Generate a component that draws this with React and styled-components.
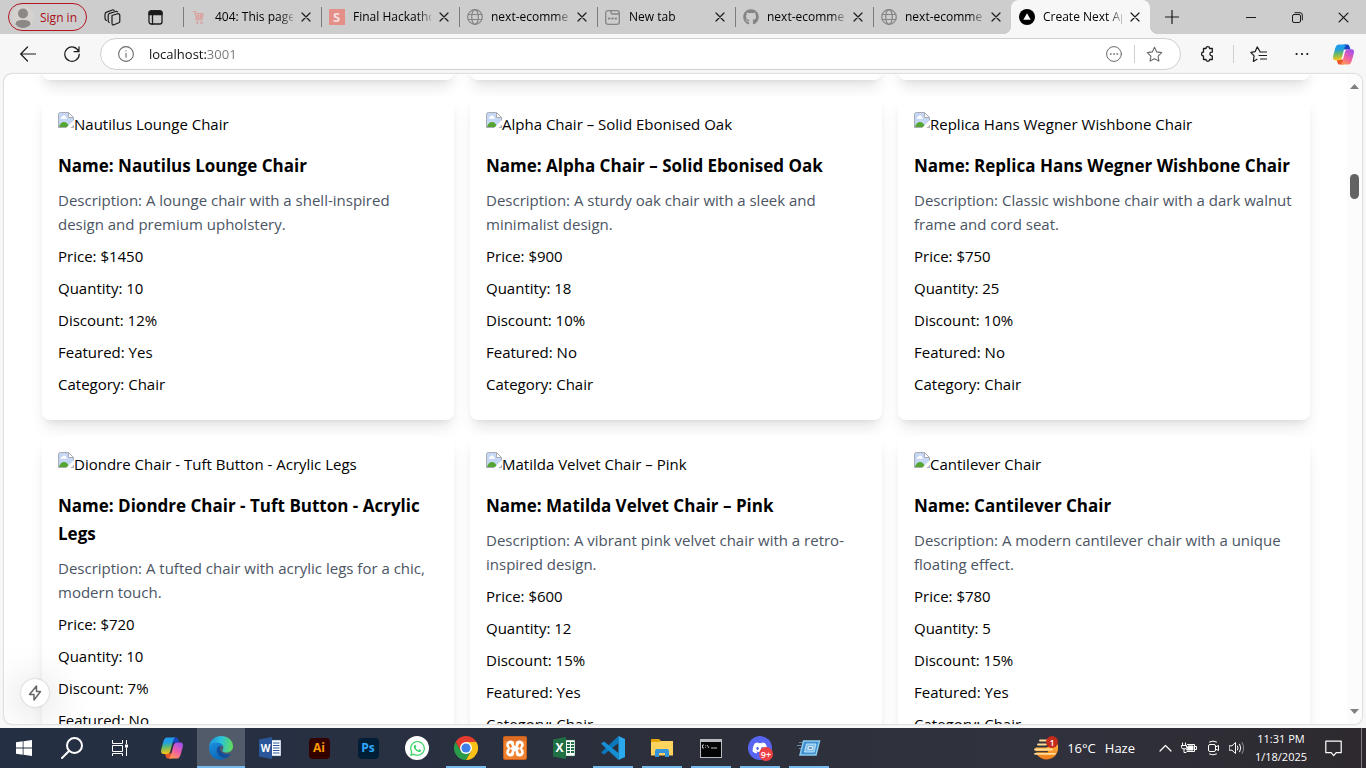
import React from 'react';
import styled, { createGlobalStyle, css } from 'styled-components';
import { FaGithub, FaWhatsapp, FaDiscord } from 'react-icons/fa';

const GlobalStyle = createGlobalStyle`
  *, *::before, *::after { box-sizing: border-box; }
  body { margin: 0; font-family: "Open Sans", "Noto Sans", sans-serif; font-size: 15px; color: #000; overflow: hidden; }
  button, input { font: inherit; color: inherit; padding: 0; border: 0; background: none; }
  h2, p, ul { margin: 0; padding: 0; }
  svg { display: block; flex: none; }
`;

const Shell = styled.div`
  display: flex;
  flex-direction: column;
  height: 100vh;
  background: #f7f7f7;
`;

/* ---------- Tab strip ---------- */

const TabStrip = styled.header`
  display: flex;
  align-items: stretch;
  height: 34px;
  flex: none;
  background: #cdcdcd;
  font-size: 12px;
`;

const StripTools = styled.div`
  display: flex;
  align-items: center;
  width: 183px;
  padding-left: 8px;
  flex: none;
`;

const SignIn = styled.button`
  display: flex;
  align-items: center;
  gap: 6px;
  width: 79px;
  height: 28px;
  padding-left: 3px;
  border: 1px solid #b3161f;
  border-radius: 14px;
  color: #a80f18;
  white-space: nowrap;
`;

const StripButton = styled.button`
  display: grid;
  place-items: center;
  width: 42px;
  height: 32px;
`;

const ToolPair = styled.div`
  display: flex;
  margin-left: 5px;
`;

const Tab = styled.div`
  position: relative;
  display: flex;
  align-items: center;
  flex: 0 1 138px;
  min-width: 60px;
  padding: 0 6px 0 7px;
  ${(p) => p.$active
    ? css`
        background: #f7f7f7;
        border-radius: 8px 8px 0 0;
        flex-basis: 139px;
        &::before, &::after {
          content: "";
          position: absolute;
          bottom: 0;
          width: 8px;
          height: 8px;
        }
        &::before { left: -8px; background: radial-gradient(circle at 0 0, #cdcdcd 8px, #f7f7f7 8px); }
        &::after { right: -8px; background: radial-gradient(circle at 100% 0, #cdcdcd 8px, #f7f7f7 8px); }
      `
    : css`
        &::before {
          content: "";
          position: absolute;
          left: 0;
          top: 7px;
          width: 1px;
          height: 20px;
          background: #7c7c7c;
        }
      `}
`;

const TabIcon = styled.span`
  display: grid;
  place-items: center;
  width: 17px;
  height: 17px;
  margin-right: 8px;
  flex: none;
`;

const TabTitle = styled.span`
  flex: 1;
  overflow: hidden;
  white-space: nowrap;
  line-height: 20px;
  mask-image: linear-gradient(90deg, #000 82%, transparent 105%);
`;

const TabClose = styled.button`
  display: grid;
  place-items: center;
  width: 18px;
  height: 18px;
  margin-left: 4px;
  flex: none;
`;

const NewTab = styled.button`
  display: grid;
  place-items: center;
  width: 43px;
  flex: none;
`;

const WindowControls = styled.div`
  display: flex;
  margin-left: auto;
`;

const WindowButton = styled.button`
  display: grid;
  place-items: center;
  width: 46px;
`;

/* ---------- Toolbar ---------- */

const Toolbar = styled.nav`
  display: flex;
  align-items: center;
  flex: none;
  height: 40px;
  padding-left: 6px;
`;

const ToolButton = styled.button`
  display: grid;
  place-items: center;
  width: ${(p) => p.$w || 44}px;
  height: 32px;
  flex: none;
`;

const AddressBar = styled.label`
  display: flex;
  align-items: center;
  flex: 1;
  height: 32px;
  margin-left: 6px;
  padding-left: 17px;
  padding-right: 6px;
  border: 1px solid #cfcfcf;
  border-radius: 16px;
  background: #fff;
`;

const AddressInput = styled.input`
  flex: 1;
  min-width: 0;
  margin-left: 15px;
  font-size: 13px;
  outline: 0;
  color: transparent;
  background: linear-gradient(90deg, #101010 57px, #767676 57px);
  background-clip: text;
  -webkit-background-clip: text;
`;

const Divider = styled.span`
  width: 1px;
  height: 18px;
  background: #cfcfcf;
  flex: none;
`;

/* ---------- Page ---------- */

const PagePanel = styled.div`
  position: relative;
  display: flex;
  flex: 1;
  min-height: 0;
  margin: 0 4px 4px;
  overflow: hidden;
  border-radius: 8px;
  background: #fff;
  box-shadow: 0 0 2px rgba(0, 0, 0, 0.35);
`;

const PageContent = styled.main`
  flex: 1;
  min-width: 0;
  overflow: hidden;
  padding: 0 37px 0 38px;
`;

/* The list is scrolled: only the lower edge of the preceding row is in view. */
const ProductGrid = styled.div`
  display: grid;
  grid-template-columns: repeat(3, minmax(0, 1fr));
  gap: 16px;
  margin-top: -74px;
`;

const cardSurface = css`
  border-radius: 8px;
  background: #fff;
  box-shadow: 0 10px 15px -3px rgba(0, 0, 0, 0.1), 0 4px 6px -4px rgba(0, 0, 0, 0.1);
`;

const CardEnd = styled.div`
  height: 80px;
  ${cardSurface}
`;

const Card = styled.article`
  padding: 16px 16px 24px;
  line-height: 24px;
  ${cardSurface}
`;

const MissingImage = styled.div`
  display: flex;
  height: 24px;
  margin-bottom: 16px;
  white-space: nowrap;
`;

const ProductName = styled.h2`
  font-size: 17px;
  font-weight: 700;
  line-height: 28px;
`;

const Description = styled.p`
  margin-top: 8px;
  color: #4b5563;
`;

const Detail = styled.p`
  margin-top: 8px;
`;

const Scrollbar = styled.div`
  display: flex;
  flex-direction: column;
  align-items: center;
  width: 15px;
  flex: none;
  background: #fcfcfc;
`;

const ScrollArrow = styled.button`
  display: grid;
  place-items: center;
  width: 15px;
  height: 25px;
`;

const ScrollTrack = styled.div`
  flex: 1;
  padding-top: 75px;
`;

const ScrollThumb = styled.div`
  width: 9px;
  height: 25px;
  border-radius: 5px;
  background: #636363;
`;

const DevIndicator = styled.button`
  position: absolute;
  left: 17px;
  bottom: 17px;
  display: grid;
  place-items: center;
  width: 28px;
  height: 28px;
  border-radius: 50%;
  background: #fff;
  box-shadow: 0 0 2px rgba(0, 0, 0, 0.25), 0 4px 40px rgba(0, 0, 0, 0.25);
`;

/* ---------- Taskbar ---------- */

const Taskbar = styled.footer`
  display: flex;
  flex: none;
  height: 40px;
  background: linear-gradient(90deg, #242f43 0%, #283041 30%, #2d2f3a 52%, #30323e 75%, #2d292e 100%);
  color: #fff;
`;

const TaskGroup = styled.div`
  display: flex;
  gap: ${(p) => p.$gap || 0}px;
  margin-left: ${(p) => p.$start || 0}px;
`;

const TaskButton = styled.button`
  position: relative;
  display: grid;
  place-items: center;
  width: 48px;
  height: 40px;
  background: ${(p) => (p.$active ? '#525b6a' : 'transparent')};
  ${(p) => (p.$active || p.$running) && css`
    &::after {
      content: "";
      position: absolute;
      bottom: 0;
      left: ${p.$active ? 0 : 4}px;
      right: ${p.$active ? 0 : 4}px;
      height: 2px;
      background: #76b9ed;
    }
  `}
`;

const Tray = styled.div`
  display: flex;
  align-items: center;
  margin-left: auto;
`;

const Weather = styled.button`
  display: flex;
  align-items: center;
  gap: 9px;
  height: 40px;
  margin-right: 18px;
  font-size: 13px;
`;

const TrayButton = styled.button`
  display: grid;
  place-items: center;
  width: 24px;
  height: 40px;
`;

const Clock = styled.button`
  width: 64px;
  font-size: 11px;
  line-height: 18px;
  text-align: center;
`;

const Notifications = styled.button`
  display: grid;
  place-items: center;
  width: 40px;
  height: 40px;
  margin-right: 8px;
`;

const ShowDesktop = styled.button`
  width: 5px;
  height: 40px;
  border-left: 1px solid #7d7b80;
`;

/* ---------- Icons ---------- */

const Line = ({ size = 16, w = size, h = size, box, width = 1, color = '#1b1b1b', children }) => (
  <svg width={w} height={h} viewBox={box || `0 0 ${w} ${h}`} fill="none" stroke={color}
    strokeWidth={width} strokeLinecap="round" strokeLinejoin="round" aria-hidden="true">{children}</svg>
);

const Cross = ({ size = 10 }) => (
  <Line size={size} box="0 0 10 10" width={1.2}><path d="M1 1l8 8M9 1L1 9" /></Line>
);

const Avatar = () => (
  <svg width="22" height="22" viewBox="0 0 22 22" aria-hidden="true">
    <circle cx="11" cy="11" r="11" fill="#d5d2ce" />
    <circle cx="11" cy="7.5" r="5" fill="#8b8886" />
    <path d="M3.5 18.500c0-3.500 2.500-4.500 7.500-4.500s7.500 1 7.500 4.500c-2 2.300-4.500 3.500-7.500 3.500s-5.500-1.200-7.500-3.500z" fill="#8b8886" />
  </svg>
);

const Workspaces = () => (
  <Line w={18} h={17} width={1.2}>
    <path d="M8 6.500l5.500-1.700q1.800-.4 2.300 1.200v6.200q0 1-1 1.500L10 15.800q-2 .5-2-1.500z" />
    <path d="M5.200 13.500q-1-.6-1-1.800V6.500q0-1.600 1.500-2.100l6-1.900q1.200-.2 1.800.4" />
    <path d="M2.500 11.500Q1 10.800 1 9.200V5.500q0-1.800 1.600-2.400L8.500 1q1-.2 1.700.4" />
  </Line>
);

const TabActions = () => (
  <Line w={15} h={15} width={1.3}>
    <rect x="1" y="1" width="13" height="13" rx="2.200" />
    <path d="M1 3.200Q1 1 3 1h9q2 0 2 2.200V4.500H1z" fill="#1b1b1b" />
    <path d="M4.500 4.500V14" />
  </Line>
);

const Cart = () => (
  <svg width="11" height="15" viewBox="0 0 11 15" fill="none" stroke="#dc9f9c" aria-hidden="true">
    <path d="M0 1.500h2l1.500 8.500H9.500M3 3.500h7l-.8 5H3.500M3 6h6.500M5.200 3.500v5M7.500 3.500v5" strokeWidth="1.200" />
    <circle cx="4.200" cy="12.800" r=".8" fill="#dc9f9c" /><circle cx="8.500" cy="12.800" r=".8" fill="#dc9f9c" />
  </svg>
);

const LetterTile = styled.span`
  display: grid;
  place-items: center;
  width: ${(p) => p.$size}px;
  height: ${(p) => p.$size}px;
  border-radius: ${(p) => p.$radius || 0}px;
  background: ${(p) => p.$bg};
  color: ${(p) => p.$fg};
  font: 700 ${(p) => p.$text}px/1 "Open Sans", sans-serif;
`;

const Globe = () => (
  <Line size={16} color="#858585" width={1.2}>
    <circle cx="8" cy="8" r="7.300" /><ellipse cx="8" cy="8" rx="3.300" ry="7.300" /><path d="M1.200 5.500h13.600M1.200 10.500h13.600" />
  </Line>
);

const NewTabPage = () => (
  <Line w={15} h={15} color="#858585" width={1.3}>
    <rect x=".7" y=".7" width="13.600" height="13.600" rx="2.300" />
    <path d="M6 1v1.500q0 1.500 1.500 1.500H14" /><path d="M3.800 8.500h.8M7.100 8.500h.8M10.400 8.500h.8" strokeWidth="1.800" />
  </Line>
);

const Triangle = () => (
  <svg width="16" height="16" viewBox="0 0 16 16" aria-hidden="true">
    <circle cx="8" cy="8" r="8" fill="#000" /><path d="M8 4.200l3.700 6.500H4.300z" fill="#fff" />
  </svg>
);

const Copilot = ({ size = 24, id }) => (
  <svg width={size} height={size} viewBox="0 0 24 24" aria-hidden="true">
    <defs>
      <linearGradient id={`${id}a`} x1="0" y1="0" x2="0.1" y2="1">
        <stop offset="0" stopColor="#1f9cf0" /><stop offset=".35" stopColor="#219ee0" /><stop offset=".62" stopColor="#68b867" /><stop offset="1" stopColor="#f5c518" />
      </linearGradient>
      <linearGradient id={`${id}b`} x1=".7" y1="0" x2=".2" y2="1">
        <stop offset="0" stopColor="#a450ef" /><stop offset=".5" stopColor="#ed5fa8" /><stop offset="1" stopColor="#ff9a4d" />
      </linearGradient>
    </defs>
    <path d="M12 1.500h4.500q1.300.3 1.800 2.200l1 3h-7z" fill="#1746c0" />
    <path d="M12 22.500H7.500q-1.300-.3-1.800-2.200l-1-3h7z" fill="#e9572b" />
    <path d="M6.700 1.500h8.500q-1.500.8-2.200 3.500L10.500 14.500Q9.700 18 6.500 18H3.500Q.4 17.800 1.200 13.500L3.500 5Q4.500 1.700 6.700 1.500z" fill={`url(#${id}a)`} />
    <path d="M17.300 22.500H8.800q1.500-.8 2.200-3.500l2.500-9.500Q14.300 6.500 17.500 6.500h3q3.100.2 2.300 4.200L20.500 19q-1 3.300-3.200 3.500z" fill={`url(#${id}b)`} />
  </svg>
);

const BrokenPicture = () => (
  <svg width="16" height="16" viewBox="0 0 16 16" aria-hidden="true">
    <path d="M.5 2.500q0-2 2-2h8l5 5v10H.5z" fill="#c6d7f5" stroke="#a9adb3" />
    <path d="M1 15q1.500-5 5-5 3.500 0 5 5z" fill="#55a630" />
    <path d="M3 6q0-1.500 1.500-1.500Q5 3 6.500 3.500T8 5.500q1 .2 1 1.200H3z" fill="#fff" />
    <path d="M10.500.5v5h5z" fill="#fff" stroke="#a9adb3" />
    <path d="M16 8L8 16h4.500L16 12.500z" fill="#fff" />
  </svg>
);

const Windows = () => (
  <svg width="16" height="16" viewBox="0 0 16 16" fill="#fff" aria-hidden="true">
    <path d="M0 2.200L6.700 1.300v6.200H0zM7.500 1.200L16 0v7.500H7.500zM0 8.400h6.700v6.300L0 13.800zM7.500 8.400H16V16l-8.500-1.200z" />
  </svg>
);

const TaskSearch = () => (
  <Line size={22} color="#fff" width={2}><circle cx="13.500" cy="8.500" r="7.500" /><path d="M8 14l-7 7" /></Line>
);

const TaskView = () => (
  <svg width="17" height="16" viewBox="0 0 17 16" fill="none" stroke="#fff" aria-hidden="true">
    <path d="M.5 0v3.500h10V0M.5 5.500h10v6H.5zM.5 16v-2.500h10V16M14.500 0v4M14.500 7.500V16" /><path d="M13 4.500h3v3h-3z" fill="#fff" stroke="none" />
  </svg>
);

const Edge = () => (
  <svg width="26" height="26" viewBox="0 0 26 26" aria-hidden="true">
    <defs>
      <linearGradient id="edgeTop" x1="0" y1=".4" x2="1" y2=".5"><stop offset="0" stopColor="#1c93dc" /><stop offset=".5" stopColor="#2dc3d8" /><stop offset="1" stopColor="#62dc58" /></linearGradient>
      <linearGradient id="edgeLow" x1="0" y1="0" x2=".6" y2="1"><stop offset="0" stopColor="#1b8fde" /><stop offset="1" stopColor="#0c68b8" /></linearGradient>
    </defs>
    <path d="M1 12C1.500 5 7 1 13 1c7 0 12 4.500 12 10.200 0 4-3 6.300-6.600 6.300-3.200 0-4.600-1.200-3.600-2.700 2-2.800-.8-6.300-5-6.300C5 8.500 2 10 1 12z" fill="url(#edgeTop)" />
    <path d="M1 12c1.500-3.300 5-4.700 8.500-4.500 3.200.2 5 2 5.800 4-4-1.500-7 1.300-6.500 4.800.7 4.300 5 7.200 9.200 7-6 3.500-17 1.200-17-11.300z" fill="url(#edgeLow)" />
    <path d="M9 13.500c-1 5 3 9.500 9 9.700 2-.8 4.200-2.700 5-4.700-4.500 2-9.600.3-11-3.500-.5-1.600.1-3 1.300-3.800-2-.3-3.700.6-4.300 2.300z" fill="#0f4f9e" />
  </svg>
);

const SheetTile = ({ letter, fill, dark, grid }) => (
  <svg width="22" height="22" viewBox="0 0 22 22" aria-hidden="true">
    <path d="M12 3h10v16H12z" fill="#fff" stroke={dark} strokeWidth=".5" />
    {grid
      ? <path d="M14 5h3v2h-3zM18 5h3v2h-3zM14 8h3v2h-3zM18 8h3v2h-3zM14 11h3v2h-3zM18 11h3v2h-3zM14 14h3v2h-3zM18 14h3v2h-3z" fill={fill} />
      : <path d="M14 6h6.500M14 8.500h6.500M14 11h6.500M14 13.500h6.500M14 16h6.500" stroke={fill} />}
    <path d="M0 2.500L13 0v22L0 19.500z" fill={fill} />
    <text x="6.500" y="15" fontFamily="Open Sans" fontSize={grid ? 12 : 10} fontWeight="700" textAnchor="middle" fill="#fff">{letter}</text>
  </svg>
);

const Chrome = () => (
  <svg width="24" height="24" viewBox="0 0 24 24" aria-hidden="true">
    <path d="M1.600 6L6.800 15 12 12V6.500L22.400 6A12 12 0 0 0 1.600 6z" fill="#e33b2e" />
    <path d="M1.600 6A12 12 0 0 0 12 24l5.200-9L12 12 6.800 15z" fill="#2a9b48" />
    <path d="M22.400 6H12l5.200 9L12 24A12 12 0 0 0 22.400 6z" fill="#fbc116" />
    <circle cx="12" cy="12" r="6" fill="#fff" /><circle cx="12" cy="12" r="4.600" fill="#3f7fe8" />
  </svg>
);

const Xampp = () => (
  <svg width="24" height="24" viewBox="0 0 24 24" aria-hidden="true">
    <rect width="24" height="24" rx="2" fill="#c9601c" />
    <rect x="1" y="1" width="22" height="22" rx="1.500" fill="#f07f2e" />
    <path d="M1 2.500q0-1.500 1.500-1.500h19q1.500 0 1.500 1.500V5H1z" fill="#dc6f25" />
    <g fill="#fff">
      <circle cx="7.500" cy="8.800" r="4.300" /><circle cx="16.500" cy="8.800" r="4.300" />
      <circle cx="7.500" cy="16.200" r="4.300" /><circle cx="16.500" cy="16.200" r="4.300" />
      <path d="M5 9.500h14v6H5z" />
    </g>
    <g fill="none" stroke="#f07f2e" strokeWidth="2.400" strokeLinecap="round" strokeLinejoin="round">
      <path d="M7 8.800L8.500 12.500 7 16.200M17 8.800L15.500 12.500 17 16.200" />
      <path d="M12 5v4M12 16v4" strokeWidth="1.600" />
    </g>
    <path d="M7.500 11.300h9v2.400h-9z" fill="#fff" />
  </svg>
);

const VsCode = () => (
  <svg width="24" height="24" viewBox="0 0 24 24" aria-hidden="true">
    <path d="M17.500 0v7L3 18.500 0 16.500z" fill="#0b78bd" />
    <path d="M0 7.500l3-2L17.500 17v7z" fill="#168ed4" />
    <path d="M17.500 0L24 3v18l-6.500 3z" fill="#2aa9ef" />
  </svg>
);

const Explorer = () => (
  <svg width="22" height="20" viewBox="0 0 22 20" aria-hidden="true">
    <path d="M0 1h8l2 2h12v14H0z" fill="#e5a50a" /><path d="M0 4h8l2-1h12v14.500H0z" fill="#ffd45e" />
    <path d="M4 19v-6q0-2 2-2h10q2 0 2 2v6h-4v-4H8v4z" fill="#3595dc" />
  </svg>
);

const Terminal = () => (
  <svg width="22" height="19" viewBox="0 0 22 19" aria-hidden="true">
    <path d="M0 0h22v19H0z" fill="#b8bcc0" /><path d="M1 3h20v15H1z" fill="#050505" />
    <path d="M4 6H2.500v3H4M5.500 6.500v.7M5.500 8v.7M7 6l2 3M11 9h6" stroke="#eee" strokeWidth=".8" fill="none" />
  </svg>
);

const DiscordIcon = styled.span`
  position: relative;
  display: grid;
  place-items: center;
  width: 24px;
  height: 24px;
  border-radius: 50%;
  background: #5865f2;
`;

const Badge = styled.span`
  position: absolute;
  right: ${(p) => p.$right}px;
  top: ${(p) => p.$top}px;
  display: grid;
  place-items: center;
  width: ${(p) => p.$size}px;
  height: ${(p) => p.$size}px;
  border-radius: 50%;
  background: ${(p) => p.$bg};
  color: #fff;
  font-size: 9px;
  font-weight: 600;
  line-height: 1;
`;

const WhatsAppIcon = styled.span`
  display: grid;
  place-items: center;
  width: 24px;
  height: 24px;
  border-radius: 50%;
  background: #fff;
  color: #3bd366;
`;

const RunBox = () => (
  <svg width="24" height="18" viewBox="0 0 24 18" aria-hidden="true">
    <path d="M6.500 2H22.500l-3.500 14H3z" fill="#3f8fd0" stroke="#8ecbf0" strokeWidth="1.500" />
    <path d="M9.500 5h9.500l-2 8H7.500z" fill="#7dbdea" stroke="#bfe3f8" /><path d="M11.500 7.800h4.500l-.6 2.400h-4.500z" fill="#2f6fae" stroke="#fff" />
    <path d="M2 3.500h3.500M0 6.500h4M2 9.500h2" stroke="#7ba3bd" strokeWidth=".8" />
  </svg>
);

const HazySun = () => (
  <svg width="24" height="24" viewBox="0 0 24 24" aria-hidden="true">
    <defs>
      <linearGradient id="sun" x1="0" y1="0" x2="0" y2="1"><stop offset="0" stopColor="#ffb73d" /><stop offset="1" stopColor="#ee7a1c" /></linearGradient>
    </defs>
    <path d="M1.500 11.500H12L23.500 8a11.500 11.500 0 0 1-22 7.500z" fill="url(#sun)" />
    <path d="M6 4.500h7M4 8.500h8M1 13.500h17M1 17.800h20" stroke="#ffdc96" strokeWidth="1.800" strokeLinecap="round" />
    <path d="M0 15.700h14" stroke="#30323e" strokeWidth="1.200" />
  </svg>
);

const WeatherIcon = styled.span`
  position: relative;
  display: block;
`;

/* ---------- Data ---------- */

const tabs = [
  { title: '404: This page could not', icon: <Cart /> },
  { title: 'Final Hackathon', icon: <LetterTile $size={16} $bg="#e58f89" $fg="#f6dfdd" $text={13}>S</LetterTile> },
  { title: 'next-ecommerce', icon: <Globe /> },
  { title: 'New tab', icon: <NewTabPage /> },
  { title: 'next-ecommerce', icon: <FaGithub size={16} color="#858585" /> },
  { title: 'next-ecommerce', icon: <Globe /> },
  { title: 'Create Next App', icon: <Triangle />, active: true },
];

const products = [
  { name: 'Nautilus Lounge Chair', description: 'A lounge chair with a shell-inspired design and premium upholstery.', price: 1450, quantity: 10, discount: 12, featured: true },
  { name: 'Alpha Chair – Solid Ebonised Oak', description: 'A sturdy oak chair with a sleek and minimalist design.', price: 900, quantity: 18, discount: 10, featured: false },
  { name: 'Replica Hans Wegner Wishbone Chair', description: 'Classic wishbone chair with a dark walnut frame and cord seat.', price: 750, quantity: 25, discount: 10, featured: false },
  { name: 'Diondre Chair - Tuft Button - Acrylic Legs', description: 'A tufted chair with acrylic legs for a chic, modern touch.', price: 720, quantity: 10, discount: 7, featured: false },
  { name: 'Matilda Velvet Chair – Pink', description: 'A vibrant pink velvet chair with a retro-inspired design.', price: 600, quantity: 12, discount: 15, featured: true },
  { name: 'Cantilever Chair', description: 'A modern cantilever chair with a unique floating effect.', price: 780, quantity: 5, discount: 15, featured: true },
];

const apps = [
  { name: 'Copilot', icon: <Copilot id="task" size={24} /> },
  { name: 'Edge', icon: <Edge />, active: true },
  { name: 'Word', icon: <SheetTile letter="W" fill="#2b579a" dark="#2b579a" /> },
  { name: 'Illustrator', icon: <LetterTile $size={21} $radius={4} $bg="#330000" $fg="#ff9a00" $text={12}>Ai</LetterTile> },
  { name: 'Photoshop', icon: <LetterTile $size={21} $radius={4} $bg="#001e36" $fg="#31a8ff" $text={12}>Ps</LetterTile> },
  { name: 'WhatsApp', icon: <WhatsAppIcon><FaWhatsapp size={17} /></WhatsAppIcon> },
  { name: 'Chrome', icon: <Chrome />, running: true },
  { name: 'XAMPP', icon: <Xampp /> },
  { name: 'Excel', icon: <SheetTile letter="X" fill="#1f7145" dark="#1f7145" grid /> },
  { name: 'Visual Studio Code', icon: <VsCode />, running: true },
  { name: 'File Explorer', icon: <Explorer />, running: true },
  { name: 'Command Prompt', icon: <Terminal />, running: true },
  { name: 'Discord', icon: <DiscordIcon><FaDiscord size={16} color="#fff" /><Badge $size={14} $right={-1} $top={11} $bg="#ed4245">9+</Badge></DiscordIcon>, running: true },
  { name: 'Run', icon: <RunBox />, running: true },
];

const Product = ({ item }) => (
  <Card>
    <MissingImage><BrokenPicture />{item.name}</MissingImage>
    <ProductName>{`Name: ${item.name}`}</ProductName>
    <Description>{`Description: ${item.description}`}</Description>
    <Detail>{`Price: $${item.price}`}</Detail>
    <Detail>{`Quantity: ${item.quantity}`}</Detail>
    <Detail>{`Discount: ${item.discount}%`}</Detail>
    <Detail>{`Featured: ${item.featured ? 'Yes' : 'No'}`}</Detail>
    <Detail>Category: Chair</Detail>
  </Card>
);

const starPath = 'M8.500 1.300l2.200 4.600 5 .7-3.600 3.500.8 5-4.400-2.400-4.400 2.400.8-5L1.300 6.600l5-.7z';

export default function App() {
  return (
    <Shell>
      <GlobalStyle />
      <TabStrip>
        <StripTools>
          <SignIn><Avatar />Sign in</SignIn>
          <ToolPair>
            <StripButton aria-label="Workspaces"><Workspaces /></StripButton>
            <StripButton aria-label="Tab actions"><TabActions /></StripButton>
          </ToolPair>
        </StripTools>
        {tabs.map((tab, i) => (
          <Tab key={i} $active={tab.active}>
            <TabIcon>{tab.icon}</TabIcon>
            <TabTitle>{tab.title}</TabTitle>
            <TabClose aria-label="Close tab"><Cross /></TabClose>
          </Tab>
        ))}
        <NewTab aria-label="New tab"><Line size={14} width={1.2}><path d="M7 .5v13M.5 7h13" /></Line></NewTab>
        <WindowControls>
          <WindowButton aria-label="Minimize"><Line size={10}><path d="M0 5.500h10" /></Line></WindowButton>
          <WindowButton aria-label="Restore"><Line size={11}><rect x=".5" y="2.500" width="8" height="8" rx="1.500" /><path d="M3 .7h5q2.300 0 2.300 2.300v5" /></Line></WindowButton>
          <WindowButton aria-label="Close window"><Cross size={11} /></WindowButton>
        </WindowControls>
      </TabStrip>

      <Toolbar>
        <ToolButton aria-label="Back"><Line size={16} width={1.2}><path d="M15.500 8H.7M7.500 1L.7 8l6.800 7" /></Line></ToolButton>
        <ToolButton aria-label="Reload"><Line size={16} width={1.2}><path d="M14.700 5.500A7.200 7.200 0 1 0 15.200 8M15 .8v4.900h-4.900" /></Line></ToolButton>
        <AddressBar>
          <Line size={16} color="#6b6b6b" width={1.100}><circle cx="8" cy="8" r="7.400" /><path d="M8 7.300v4M8 4.700v.2" /></Line>
          <AddressInput aria-label="Address" defaultValue="localhost:3001" />
          <ToolButton $w={40} type="button" aria-label="More site actions"><Line size={16} color="#6b6b6b"><circle cx="8" cy="8" r="7.400" /><path d="M4.500 8h.5M7.800 8h.4M11 8h.5" strokeWidth="1.600" /></Line></ToolButton>
          <Divider />
          <ToolButton $w={39} type="button" aria-label="Add to favorites"><Line size={17} color="#6b6b6b" width={1.100}><path d={starPath} /></Line></ToolButton>
        </AddressBar>
        <ToolButton $w={52} aria-label="Extensions">
          <Line w={12} h={16} width={1.3}><path d="M2.500 2.500h2.500a1.800 1.800 0 0 1 3.600 0h2.700v3.700h-.6a1.800 1.800 0 0 0 0 3.600h.6v3.700H8.600a1.800 1.800 0 0 1-3.600 0H2.500v-3.500a2 2 0 0 1 0-4z" /></Line>
        </ToolButton>
        <Divider />
        <ToolButton $w={49} aria-label="Favorites">
          <Line size={17} width={1.2}><path d="M10 5.500L7.200.9 5.200 5.600.8 6.400l3.300 3.500-.8 5.600 3.700-2.200M10 6h6.500M9 9.500h7.500M10.500 13h6" /></Line>
        </ToolButton>
        <ToolButton $w={38} aria-label="Settings and more"><Line w={14} h={4} width={2}><path d="M1.500 2h.2M6.900 2h.2M12.200 2h.2" /></Line></ToolButton>
        <ToolButton $w={45} aria-label="Copilot"><Copilot id="bar" size={23} /></ToolButton>
      </Toolbar>

      <PagePanel>
        <PageContent>
          <ProductGrid>
            <CardEnd /><CardEnd /><CardEnd />
            {products.map((item) => <Product key={item.name} item={item} />)}
          </ProductGrid>
        </PageContent>
        <Scrollbar>
          <ScrollArrow aria-label="Scroll up"><svg width="9" height="5" viewBox="0 0 9 5"><path d="M4.500 0L9 5H0z" fill="#808080" /></svg></ScrollArrow>
          <ScrollTrack><ScrollThumb /></ScrollTrack>
          <ScrollArrow aria-label="Scroll down"><svg width="9" height="5" viewBox="0 0 9 5"><path d="M4.500 5L9 0H0z" fill="#808080" /></svg></ScrollArrow>
        </Scrollbar>
        <DevIndicator aria-label="Static route">
          <Line w={14} h={16} color="#666" width={1.500}><path d="M8.500 1L1.500 9.500H6V15l6.500-8.500H8.500z" /></Line>
        </DevIndicator>
      </PagePanel>

      <Taskbar>
        <TaskGroup>
          <TaskButton aria-label="Start"><Windows /></TaskButton>
          <TaskButton aria-label="Search"><TaskSearch /></TaskButton>
          <TaskButton aria-label="Task view"><TaskView /></TaskButton>
        </TaskGroup>
        <TaskGroup $gap={1} $start={4}>
          {apps.map((app) => (
            <TaskButton key={app.name} aria-label={app.name} $active={app.active} $running={app.running}>{app.icon}</TaskButton>
          ))}
        </TaskGroup>
        <Tray>
          <Weather>
            <WeatherIcon>
              <HazySun />
              <Badge $size={12} $right={0} $top={0} $bg="#c42b1c">1</Badge>
            </WeatherIcon>
            <span>16°C</span><span>Haze</span>
          </Weather>
          <TrayButton aria-label="Show hidden icons"><Line w={13} h={8} color="#fff" width={1.2}><path d="M1 7l5.500-5.500L12 7" /></Line></TrayButton>
          <TrayButton aria-label="Battery">
            <Line w={16} h={12} color="#fff"><path d="M6.500 2.500h7v7H6M13.500 4.500h2v3h-2M1.500 1v2M4.500 1v2M.5 3.500h5v2q0 1.500-2.500 1.500T.5 5.500zM3 7v3.500h2" /><path d="M7.500 4h4.500v4H6z" fill="#fff" /></Line>
          </TrayButton>
          <TrayButton aria-label="Meet now">
            <Line w={13} h={16} color="#fff"><rect x="1.500" y="4.500" width="7" height="7" rx="1.500" /><path d="M8.500 7l3-1.500v5L8.500 9M2.500 2Q6 0 9.500 2M2.500 14q3.500 2 7 0" /></Line>
          </TrayButton>
          <TrayButton aria-label="Volume">
            <Line w={16} h={14} color="#fff"><path d="M.5 4.800h2.500L6.500 1.500v11L3 9.200H.5zM8.500 5q1.200 2 0 4M10.700 3.200q2.300 3.800 0 7.600" /><path d="M13 1.500q3.500 5.500 0 11" stroke="#8b8b92" /></Line>
          </TrayButton>
          <Clock>11:31 PM<br />1/18/2025</Clock>
          <Notifications aria-label="Notifications"><Line size={17} color="#fff" width={1.2}><path d="M.8 1.200h15.400v11.500h-5l-2.500 3-2.500-3H.8z" /></Line></Notifications>
          <ShowDesktop aria-label="Show desktop" />
        </Tray>
      </Taskbar>
    </Shell>
  );
}
